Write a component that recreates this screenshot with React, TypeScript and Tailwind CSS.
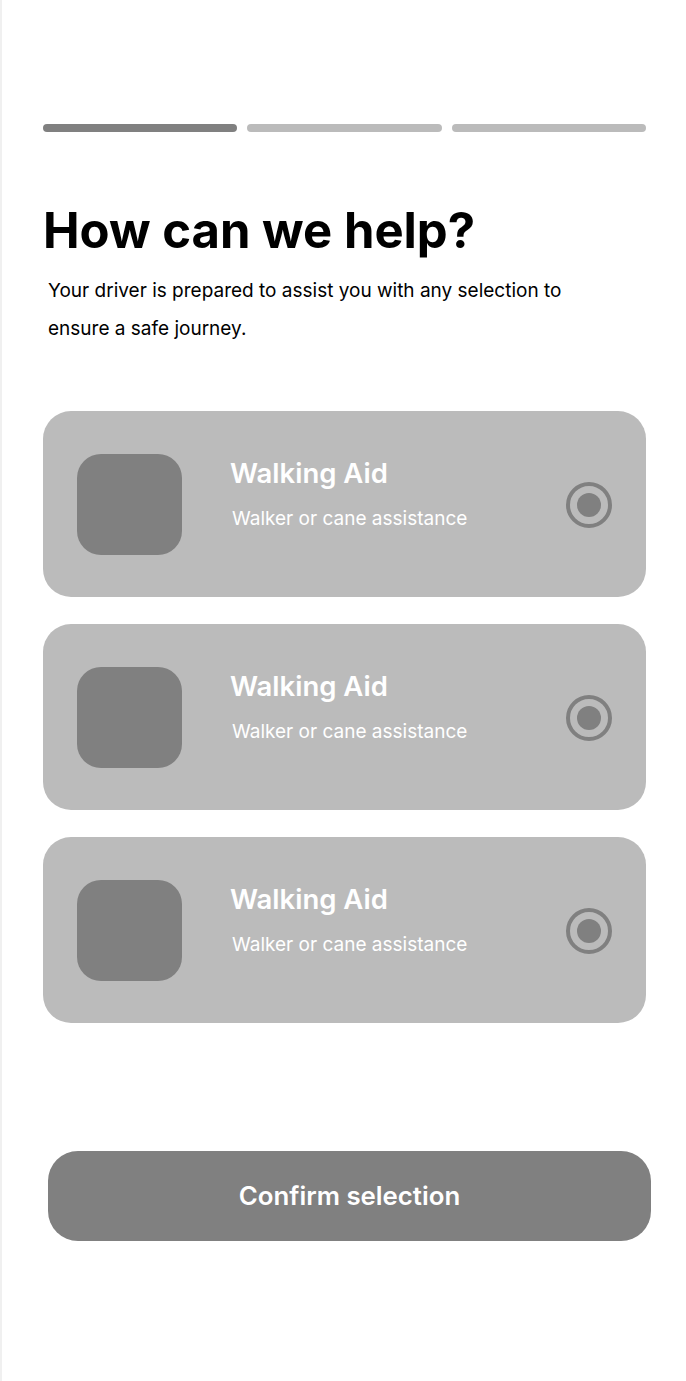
import React, { useState } from 'react';

const options = [
  { id: 'a', title: 'Walking Aid', subtitle: 'Walker or cane assistance' },
  { id: 'b', title: 'Walking Aid', subtitle: 'Walker or cane assistance' },
  { id: 'c', title: 'Walking Aid', subtitle: 'Walker or cane assistance' },
];

const Radio: React.FC = () => (
  <div className="w-[46px] h-[46px] rounded-full border-[4px] border-[#808080] flex items-center justify-center">
    <div className="w-[24px] h-[24px] rounded-full bg-[#808080]" />
  </div>
);

const App: React.FC = () => {
  const [selected, setSelected] = useState('a');

  return (
    <div className="min-h-[1381px] bg-white border-l-2 border-[#f0f0f0] font-['Inter','Liberation_Sans',sans-serif]">
      <div className="pt-[124px] pl-[41px] pr-[40px]">
        {/* step indicator */}
        <div className="flex gap-[10px]">
          <div className="flex-1 h-[8px] rounded-full bg-[#808080]" />
          <div className="flex-1 h-[8px] rounded-full bg-[#bbbbbb]" />
          <div className="flex-1 h-[8px] rounded-full bg-[#bbbbbb]" />
        </div>

        <h1 className="mt-[70px] text-[49px] leading-[58px] font-bold text-black">
          How can we help?
        </h1>
        <p className="mt-[12px] pl-[5px] text-[19px] leading-[38px] text-black max-w-[540px]">
          Your driver is prepared to assist you with any selection to ensure a safe journey.
        </p>

        <div className="mt-[63px] flex flex-col gap-[27px]">
          {options.map(opt => (
            <button
              key={opt.id}
              onClick={() => setSelected(opt.id)}
              className="h-[186px] rounded-[28px] bg-[#bbbbbb] flex items-start pl-[34px] pr-[34px] pt-[43px] text-left"
            >
              <div className="w-[105px] h-[101px] rounded-[24px] bg-[#808080] shrink-0" />
              <div className="ml-[48px] flex-1 pt-[2px]">
                <div className="text-[27.5px] leading-[34px] font-semibold text-white">{opt.title}</div>
                <div className="mt-[17px] ml-[2px] text-[19px] leading-[24px] text-white">{opt.subtitle}</div>
              </div>
              <div className="mt-[28px]">
                <Radio />
              </div>
            </button>
          ))}
        </div>

        <button className="mt-[128px] ml-[5px] w-[603px] h-[90px] rounded-[30px] bg-[#808080] text-white text-[25.8px] font-semibold">
          Confirm selection
        </button>
      </div>
    </div>
  );
};

export default App;
